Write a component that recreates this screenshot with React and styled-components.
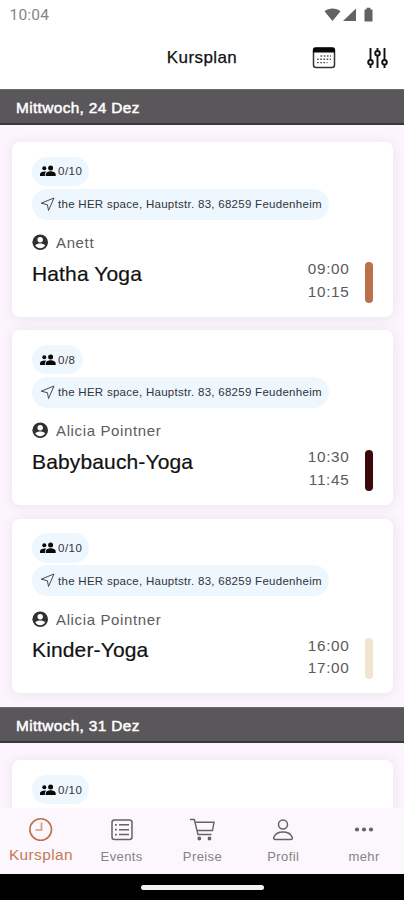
import styled, { createGlobalStyle } from 'styled-components';

const GlobalStyle = createGlobalStyle`
    * {
        box-sizing:border-box;
    }
    body {
        margin:0;
        background:#fcf5fd;
        font-family:"Liberation Sans", Arial, sans-serif;
    }
`
const Screen = styled.div`
    width:404px;
    height:900px;
    display:flex;
    flex-direction:column;
    overflow:hidden;
    background:#fcf5fd;
`
const StatusBar = styled.div`
    height:28px;
    flex:none;
    display:flex;
    align-items:center;
    justify-content:space-between;
    padding:1px 30px 0 9.5px;
    background:#fff;
`
const Clock = styled.span`
    font-family:Roboto, sans-serif;
    font-size:15.5px;
    letter-spacing:.2px;
    color:#858585;
`
const Header = styled.header`
    height:61px;
    flex:none;
    display:grid;
    grid-template-columns:1fr auto 1fr;
    align-items:center;
    padding:0 16px 2px;
    background:#fff;
`
const Title = styled.h1`
    grid-column:2;
    margin:0;
    font-size:17px;
    font-weight:400;
    letter-spacing:.4px;
    color:#111;
    -webkit-text-stroke:.25px #111;
`
const Actions = styled.div`
    display:flex;
    align-items:center;
    justify-content:flex-end;
    gap:31px;
`
const Content = styled.main`
    flex:1;
    min-height:0;
    overflow:hidden;
`
const DayBar = styled.h2`
    height:36px;
    margin:0;
    padding:2px 16px 0;
    display:flex;
    align-items:center;
    font-size:15.4px;
    font-weight:400;
    letter-spacing:.36px;
    color:#fff;
    -webkit-text-stroke:.5px #fff;
    background:#5a575b;
    border-top:1px solid #6d6b6e;
    border-bottom:2px solid #39373b;
`
const List = styled.div`
    display:flex;
    flex-direction:column;
    gap:13.5px;
    padding:17px 11px 14px 12px;
`
const Card = styled.article`
    height:174.8px;
    display:flex;
    flex-direction:column;
    align-items:flex-start;
    padding:14.5px 20px 0;
    background:#fff;
    border-radius:8px;
    box-shadow:0 1px 12px rgba(80, 60, 95, .1);
`
const Chip = styled.div`
    height:${props => props.$tall ? '31px' : '29.5px'};
    display:flex;
    align-items:center;
    gap:2px;
    margin-bottom:2.5px;
    padding:0 7px 0 8px;
    border-radius:16px;
    background:#eff7fe;
    font-size:11.5px;
    letter-spacing:.28px;
    white-space:nowrap;
    color:#2f3438;
`
const Spots = styled.span`
    letter-spacing:.5px;
`
const Teacher = styled.div`
    display:flex;
    align-items:center;
    gap:7px;
    height:20px;
    margin-top:10.5px;
    font-size:15px;
    letter-spacing:.63px;
    color:#5c5c5c;
`
const Bottom = styled.div`
    width:100%;
    display:flex;
    align-items:flex-start;
    margin-top:2px;
`
const Name = styled.h3`
    flex:1;
    margin:7px 0 0;
    font-size:21px;
    line-height:24px;
    font-weight:400;
    letter-spacing:.14px;
    color:#111;
    -webkit-text-stroke:.2px #111;
`
const Times = styled.div`
    margin:3.5px 15.5px 0 0;
    font-size:15.3px;
    line-height:22.7px;
    letter-spacing:.7px;
    text-align:right;
    color:#5a5a5a;
`
const Marker = styled.div`
    width:8px;
    height:41px;
    margin-top:7px;
    border-radius:4px;
    background:${props => props.$color};
`
const Nav = styled.nav`
    height:66px;
    flex:none;
    display:grid;
    grid-template-columns:repeat(5, 1fr);
    background:#fcf6fd;
`
const Tab = styled.div`
    display:flex;
    flex-direction:column;
    align-items:center;
    padding:8px 0 0 1px;
    font-size:${props => props.$active ? '15.4px' : '13px'};
    letter-spacing:.4px;
    line-height:18px;
    color:${props => props.$active ? '#c57a55' : '#858287'};

    svg {
        margin-bottom:${props => props.$active ? '4px' : '5.5px'};
        color:${props => props.$active ? '#c0704a' : '#666268'};
    }
`
const HomeArea = styled.div`
    height:26px;
    flex:none;
    display:flex;
    justify-content:center;
    align-items:center;
    background:#000;
`
const HomeHandle = styled.div`
    width:123px;
    height:5px;
    border-radius:3px;
    background:#f2f2f2;
`

const StatusIcons = () => (
    <svg width="50" height="16" viewBox="0 0 50 16" fill="#626262">
        <path d="M0.500 4.200C5 .7 12 .7 16.500 4.200L8.500 14z"/>
        <path d="M32 1.500V14H19z"/>
        <path d="M40.500 2.400h2V.8h4v1.600H48.500V14.400h-8z"/>
    </svg>
)

const CalendarIcon = () => (
    <svg width="24" height="22" viewBox="0 0 24 22" fill="none">
        <rect x="1.500" y="1" width="21" height="19.500" rx="2.500" stroke="#333" strokeWidth="1.500"/>
        <path d="M1 5.500V3Q1 .5 3.500 .5H20.500Q23 .5 23 3V5.500z" fill="#080808"/>
        <path d="M8.500 9H19M5 12.300H19M5 15.600H15.500" stroke="#555" strokeWidth="1.400" strokeDasharray="1.700 1.500"/>
    </svg>
)

const FilterIcon = () => (
    <svg width="21" height="22" viewBox="0 0 21 22" fill="none" stroke="#111" strokeWidth="1.900">
        <path d="M3.500 1V12.500M3.500 18V21M10.500 1V3.500M10.500 9V21M17.500 1V12.500M17.500 18V21"/>
        <circle cx="3.500" cy="15.300" r="2.300"/>
        <circle cx="10.500" cy="6.300" r="2.300"/>
        <circle cx="17.500" cy="15.300" r="2.300"/>
    </svg>
)

const PeopleIcon = () => (
    <svg width="16" height="12" viewBox="0 0 16 12" fill="#080808">
        <circle cx="4.300" cy="3.300" r="2"/>
        <circle cx="10.600" cy="3" r="2.500"/>
        <path d="M0 11V9.200C0 7.200 2.500 6.400 4.300 6.400Q5.600 6.400 6.500 6.800C5.300 7.500 4.900 8.400 4.900 9.500V11z"/>
        <path d="M5.700 11V9.500C5.700 7.300 8.500 6.300 10.600 6.300S15.700 7.300 15.700 9.500V11z"/>
    </svg>
)

const SendIcon = () => (
    <svg width="16" height="15" viewBox="0 0 16 15" fill="none" stroke="#444a50" strokeWidth="1" strokeLinejoin="round">
        <path d="M1.200 6.200L14 1L8.500 13.500L7.400 7.700z"/>
    </svg>
)

const PersonIcon = () => (
    <svg width="17" height="17" viewBox="0 0 17 17">
        <circle cx="8.200" cy="8.300" r="7.800" fill="#303030"/>
        <circle cx="8.200" cy="5.700" r="2.700" fill="#fff"/>
        <path d="M3.200 11.600C4.200 10 6.500 9.600 8.200 9.600S12.200 10 13.200 11.600C11 15 5.400 15 3.200 11.600z" fill="#fff"/>
    </svg>
)

const ClockIcon = () => (
    <svg width="26" height="26" viewBox="0 0 26 26" fill="none" stroke="currentColor">
        <circle cx="12.700" cy="13.500" r="10.800" strokeWidth="1.600"/>
        <path d="M13.500 6.500V14H7.500" stroke="#d39a7d" strokeWidth="1.700"/>
    </svg>
)

const ListIcon = () => (
    <svg width="26" height="26" viewBox="0 0 26 26" fill="none" stroke="currentColor">
        <rect x="3" y="4" width="20" height="19.500" rx="2.500" strokeWidth="1.500"/>
        <path d="M10 8.800H20M10 13.700H20M10 18.600H20" strokeWidth="1.500"/>
        <path d="M6 8.800H7.800M6 13.700H7.800M6 18.600H7.800" strokeWidth="1.700"/>
    </svg>
)

const CartIcon = () => (
    <svg width="28" height="26" viewBox="0 0 28 26" fill="none" stroke="currentColor" strokeWidth="1.400">
        <path d="M2 3.500H6.300L10 18.500H23.500M7 6.200H26L24.500 14.500H9"/>
        <circle cx="11.300" cy="22.500" r="1.200" fill="currentColor"/>
        <circle cx="21.500" cy="22.500" r="1.200" fill="currentColor"/>
    </svg>
)

const ProfileIcon = () => (
    <svg width="26" height="26" viewBox="0 0 26 26" fill="none" stroke="currentColor" strokeWidth="1.500">
        <circle cx="13" cy="8.500" r="4.500"/>
        <path d="M5.500 23.500C3.700 23.500 3.300 22.400 3.900 21C5.500 17.500 9.500 16 13 16S20.500 17.500 22.100 21C22.700 22.400 22.300 23.500 20.500 23.500z"/>
    </svg>
)

const DotsIcon = () => (
    <svg width="26" height="26" viewBox="0 0 26 26" fill="currentColor">
        <circle cx="6" cy="13.500" r="2.100"/>
        <circle cx="13" cy="13.500" r="2.100"/>
        <circle cx="20" cy="13.500" r="2.100"/>
    </svg>
)

const address = 'the HER space, Hauptstr. 83, 68259 Feudenheim'

const days = [
    {
        label: 'Mittwoch, 24 Dez',
        courses: [
            { name: 'Hatha Yoga', teacher: 'Anett', spots: '0/10', start: '09:00', end: '10:15', color: '#bb704b' },
            { name: 'Babybauch-Yoga', teacher: 'Alicia Pointner', spots: '0/8', start: '10:30', end: '11:45', color: '#3b080b' },
            { name: 'Kinder-Yoga', teacher: 'Alicia Pointner', spots: '0/10', start: '16:00', end: '17:00', color: '#f0e5d0' },
        ],
    },
    {
        label: 'Mittwoch, 31 Dez',
        courses: [{ spots: '0/10' }],
    },
]

const tabs = [
    { label: 'Kursplan', Icon: ClockIcon, active: true },
    { label: 'Events', Icon: ListIcon },
    { label: 'Preise', Icon: CartIcon },
    { label: 'Profil', Icon: ProfileIcon },
    { label: 'mehr', Icon: DotsIcon },
]

const Course = ({name, teacher, spots, start, end, color}) => {
    return(
        <Card>
            <Chip><PeopleIcon/><Spots>{spots}</Spots></Chip>
            {name && <>
                <Chip $tall><SendIcon/>{address}</Chip>
                <Teacher><PersonIcon/>{teacher}</Teacher>
                <Bottom>
                    <Name>{name}</Name>
                    <Times>
                        <div>{start}</div>
                        <div>{end}</div>
                    </Times>
                    <Marker $color={color}/>
                </Bottom>
            </>}
        </Card>
    )
}

const App = () => {
    return(
        <Screen>
            <GlobalStyle/>
            <StatusBar>
                <Clock>10:04</Clock>
                <StatusIcons/>
            </StatusBar>
            <Header>
                <Title>Kursplan</Title>
                <Actions>
                    <CalendarIcon/>
                    <FilterIcon/>
                </Actions>
            </Header>
            <Content>
                {days.map(day => (
                    <section key={day.label}>
                        <DayBar>{day.label}</DayBar>
                        <List>
                            {day.courses.map((course, i) => <Course key={i} {...course}/>)}
                        </List>
                    </section>
                ))}
            </Content>
            <Nav>
                {tabs.map(({label, Icon, active}) => (
                    <Tab key={label} $active={active}>
                        <Icon/>
                        {label}
                    </Tab>
                ))}
            </Nav>
            <HomeArea><HomeHandle/></HomeArea>
        </Screen>
    )
}

export default App;
